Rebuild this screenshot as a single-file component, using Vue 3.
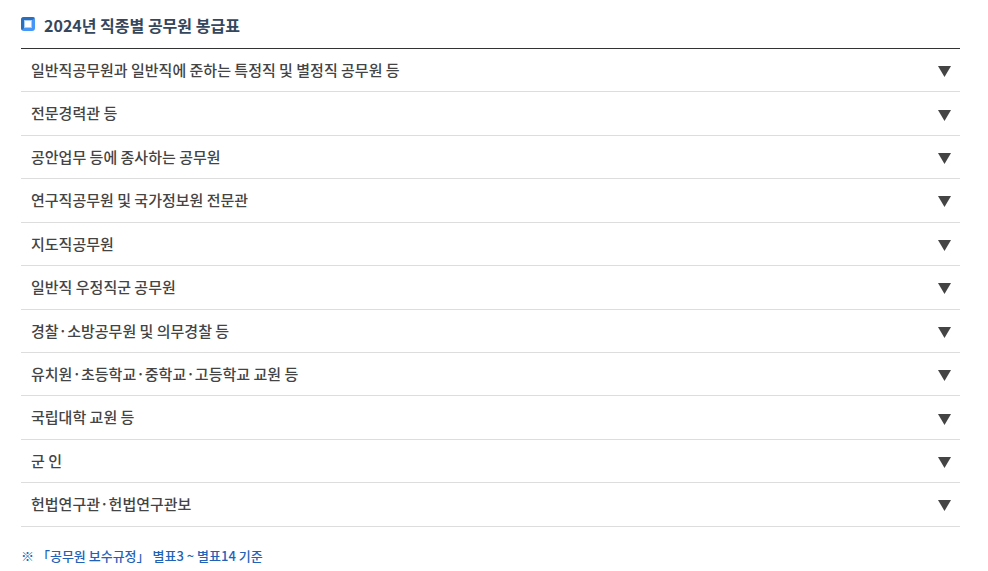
<script setup>
const items = [
  '일반직공무원과 일반직에 준하는 특정직 및 별정직 공무원 등',
  '전문경력관 등',
  '공안업무 등에 종사하는 공무원',
  '연구직공무원 및 국가정보원 전문관',
  '지도직공무원',
  '일반직 우정직군 공무원',
  '경찰·소방공무원 및 의무경찰 등',
  '유치원·초등학교·중학교·고등학교 교원 등',
  '국립대학 교원 등',
  '군 인',
  '헌법연구관·헌법연구관보',
]
</script>

<template>
  <main class="page">
    <h1 class="title">
      <svg class="marker" viewBox="0 0 14 14" aria-hidden="true">
        <rect width="14" height="14" rx="3" fill="#4596f7" />
        <path d="M3 0H11Q13 0 14 1L10 4H4V10L1 13Q0 12 0 11V3Q0 0 3 0Z" fill="#2a6fbd" />
        <rect x="3" y="3" width="8" height="8" fill="#a9cdf5" />
        <rect x="4" y="4" width="6" height="6" fill="#fff" />
      </svg>
      2024년 직종별 공무원 봉급표
    </h1>
    <ul class="list">
      <li v-for="item in items" :key="item" class="item">
        <button type="button" class="row">
          <span>{{ item }}</span>
          <svg class="arrow" viewBox="0 0 13 11" aria-hidden="true"><path d="M0 0H13L6.5 11Z" /></svg>
        </button>
      </li>
    </ul>
    <p class="note">※ 「공무원 보수규정」 별표3 ~ 별표14 기준</p>
  </main>
</template>

<style>
body {
  margin: 0;
  background: #fff;
}
</style>

<style scoped>
.page {
  padding: 4px 28px 0 21px;
  font-family: "Noto Sans CJK KR", sans-serif;
  color: #444;
}
.title {
  display: flex;
  align-items: center;
  gap: 9px;
  height: 42px;
  margin: 0 0 2px;
  font-size: 16px;
  font-weight: 700;
  color: #34475c;
}
.marker {
  width: 14px;
  height: 14px;
  margin-bottom: 2px;
}
.list {
  margin: 0;
  padding: 0;
  list-style: none;
  border-top: 1px solid #333;
}
.item {
  border-bottom: 1px solid #ddd;
}
.row {
  display: flex;
  align-items: center;
  justify-content: space-between;
  width: 100%;
  padding: 10px 9px 10px 10px;
  border: 0;
  background: none;
  font: 500 15px/1.495 "Noto Sans CJK KR", sans-serif;
  color: #444;
  text-align: left;
  cursor: pointer;
}
.arrow {
  width: 13px;
  height: 11px;
  margin-top: 3px;
  fill: #444;
}
.note {
  margin: 18px 0 0;
  font-size: 13px;
  line-height: 22px;
  font-weight: 500;
  color: #1f62b8;
}
</style>
